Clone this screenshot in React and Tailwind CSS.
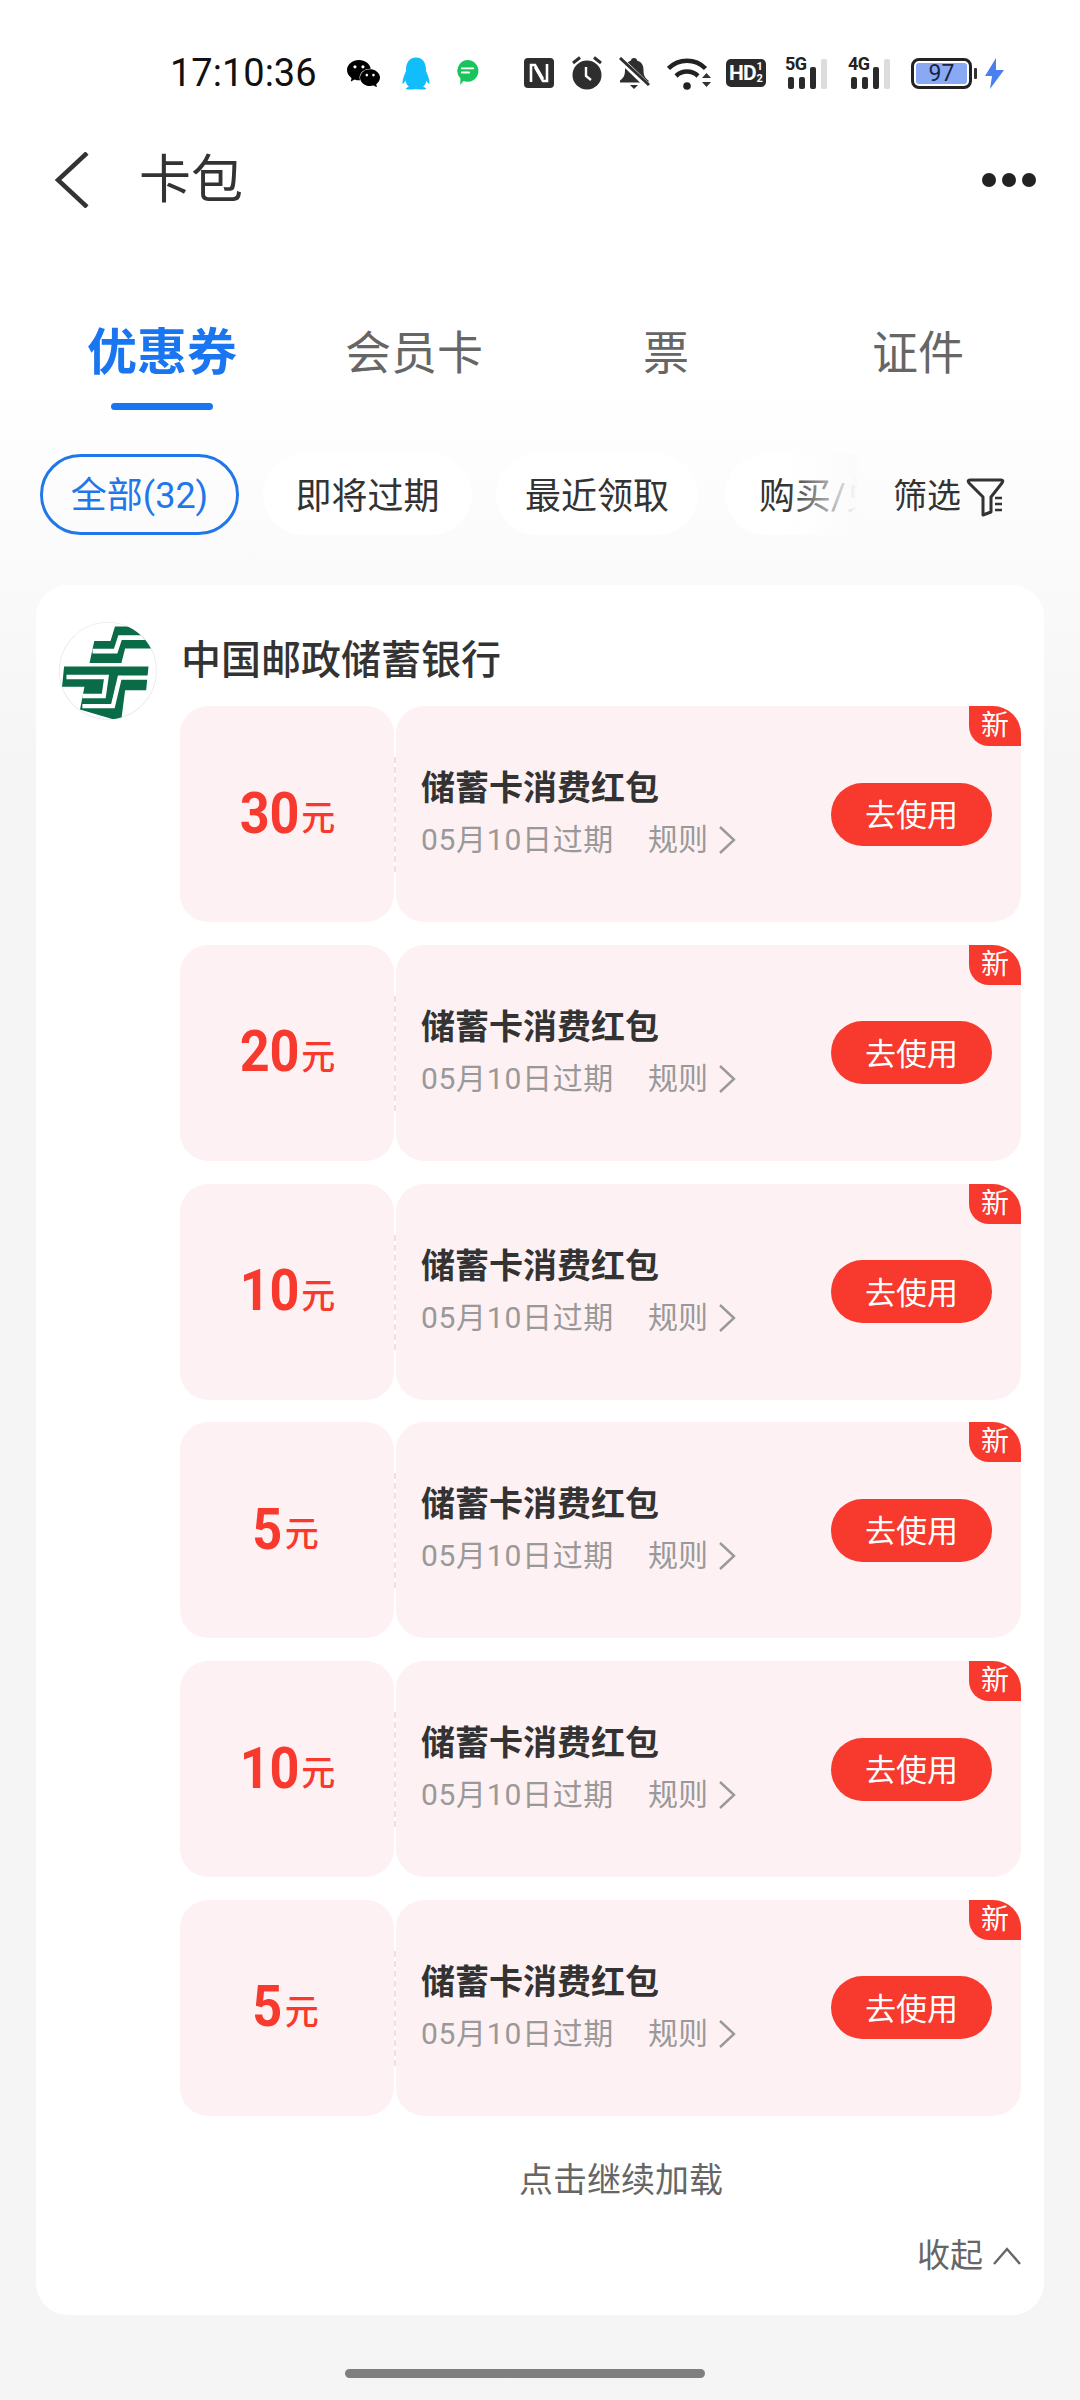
import { SiWechat, SiTencentqq } from 'react-icons/si'

const tabs = ['优惠券', '会员卡', '票', '证件']

const coupons = [
  { amount: '30' },
  { amount: '20' },
  { amount: '10' },
  { amount: '5' },
  { amount: '10' },
  { amount: '5' },
]

function Signal({ label }) {
  return (
    <div className="relative w-[46px] h-[32px] flex items-end gap-[5px] pl-[3px]">
      <span className="absolute left-0 top-[-2px] text-[18px] leading-[18px] font-bold tracking-[-0.5px] text-[#222]">{label}</span>
      <span className="w-[6px] h-[12px] rounded-[2px] bg-[#2a2a2a]" />
      <span className="w-[6px] h-[12px] rounded-[2px] bg-[#2a2a2a]" />
      <span className="w-[6px] h-[22px] rounded-[2px] bg-[#2a2a2a]" />
      <span className="w-[6px] h-[30px] rounded-[2px] bg-[#dcdcdc]" />
    </div>
  )
}

function StatusBar() {
  return (
    <div className="h-[110px] pt-[36px] pl-[170px] flex items-center">
      <span className="w-[145px] text-[38px] leading-[44px] text-[#111] whitespace-nowrap">17:10:36</span>
      <SiWechat className="ml-[32px] w-[33px] h-[33px] text-black" />
      <SiTencentqq className="ml-[20px] w-[32px] h-[37px] text-[#12bdfb]" />
      <svg className="ml-[24px]" width="23" height="29" viewBox="0 0 22 28">
        <path d="M11 1a10.500 10.500 0 1 1-4 20.200L4 25l.2-6.200A10.500 10.500 0 0 1 11 1z" fill="#19c45c" />
        <path d="M5.500 9h11M5.500 13h7" stroke="#fff" strokeWidth="1.800" strokeLinecap="round" />
      </svg>
      <svg className="ml-[45px]" width="30" height="30" viewBox="0 0 30 30">
        <rect width="30" height="30" rx="4" fill="#2e2e2e" />
        <path d="M7 24V7h4l8 14" fill="none" stroke="#fff" strokeWidth="2.600" />
        <path d="M23 6v17h-4l-8-14" fill="none" stroke="#fff" strokeWidth="2.600" />
      </svg>
      <svg className="ml-[17px]" width="32" height="34" viewBox="0 0 32 34">
        <circle cx="16" cy="19" r="14.500" fill="#2e2e2e" />
        <path d="M15 11v9l5 4" fill="none" stroke="#fff" strokeWidth="2.400" />
        <path d="M2 7l7-5.500M30 7l-7-5.500" stroke="#2e2e2e" strokeWidth="3" />
      </svg>
      <svg className="ml-[16px]" width="31" height="33" viewBox="0 0 31 33">
        <path d="M15 1c2 0 3 1 3 2.500 5 1.500 6.500 5 6.500 9.500 0 5 1 7.500 5 10.500v2H1v-2c4-3 5-5.500 5-10.500 0-4.500 1.500-8 6-9.500C12 2 13 1 15 1z" fill="#2e2e2e" />
        <path d="M11 28h8l-4 4z" fill="#2e2e2e" />
        <path d="M1 2l28 27" stroke="#fff" strokeWidth="6" />
        <path d="M1 1l29 27" stroke="#2e2e2e" strokeWidth="3" />
      </svg>
      <svg className="ml-[17px]" width="44" height="33" viewBox="0 0 44 33">
        <path d="M1.500 11.500a26 26 0 0 1 37 0" fill="none" stroke="#222" strokeWidth="4.500" />
        <path d="M9 19a16 16 0 0 1 22 0" fill="none" stroke="#222" strokeWidth="4.500" />
        <circle cx="20" cy="29" r="3.800" fill="#222" />
        <path d="M35 21l4.500-5 4.500 5zM35 25l4.500 5 4.500-5z" fill="#333" />
      </svg>
      <div className="ml-[15px] w-[40px] h-[28px] rounded-[5px] bg-[#2a2a2a] flex items-center justify-center text-white">
        <span className="text-[21px] leading-[28px] font-bold tracking-[-1px]">HD</span>
        <span className="ml-[1px] flex flex-col text-[11px] leading-[12px] font-bold">
          <span>1</span>
          <span>2</span>
        </span>
      </div>
      <div className="ml-[19px]"><Signal label="5G" /></div>
      <div className="ml-[17px]"><Signal label="4G" /></div>
      <div className="ml-[17px] w-[61px] h-[31px] rounded-[8px] border-[3px] border-[#222] p-[2px]">
        <div className="h-full rounded-[3px] bg-[#8aa9f5] flex items-center justify-center text-[23px] leading-none text-[#1a2340]">97</div>
      </div>
      <div className="ml-[2px] w-[3px] h-[11px] rounded-[1px] bg-[#333]" />
      <svg className="ml-[8px]" width="19" height="31" viewBox="0 0 19 31">
        <path d="M11 0L0 18h7l-2 13L19 12h-8z" fill="#4a7ff0" />
      </svg>
    </div>
  )
}

function PostLogo() {
  return (
    <svg className="shrink-0" width="98" height="98" viewBox="13 14 289 289">
      <defs>
        <clipPath id="logo-clip">
          <circle cx="157" cy="158" r="143" />
        </clipPath>
      </defs>
      <circle cx="157" cy="158" r="143" fill="#fff" stroke="#e8eeeb" strokeWidth="3" />
      <g clipPath="url(#logo-clip)">
        <path d="M178 27H300V92H208L197 135H103L117 70H165z" fill="#0a6b47" />
        <path d="M270 60H193L180 100H112" fill="none" stroke="#fff" strokeWidth="14" />
        <path d="M28 145H277L270 215H208L197 300H170L75 272L88 205H22z" fill="#0a6b47" />
        <path d="M35 176H153L145 232H82" fill="none" stroke="#fff" strokeWidth="13" />
        <path d="M82 262H172L192 178H280" fill="none" stroke="#fff" strokeWidth="13" />
      </g>
    </svg>
  )
}

function Coupon({ amount }) {
  return (
    <div className="flex h-[216px]">
      <div className="w-[214px] shrink-0 rounded-[28px] bg-[#fef1f3] pr-[6px] flex items-center justify-center text-[#f8392e]">
        <span className="inline-block mb-[3px] text-[58px] leading-[64px] font-bold scale-x-[.9] origin-right">{amount}</span>
        <span className="ml-[2px] text-[34px] leading-[40px] font-medium mt-[8px]">元</span>
      </div>
      <div className="relative flex-1 ml-[2px] rounded-[28px] bg-[#fef1f3] flex items-center pl-[25px] pr-[29px] justify-between">
        <div className="absolute left-[-2px] top-[51px] h-[115px] border-l-2 border-dashed border-[#f1dfe2]" />
        <div className="flex flex-col mb-[4px]">
          <span className="text-[34px] leading-[48px] font-bold text-[#333]">储蓄卡消费红包</span>
          <div className="mt-[8px] flex items-center text-[30px] leading-[40px] text-[#999]">
            <span className="w-[190px] whitespace-nowrap tracking-[0.7px]">05月10日过期</span>
            <span className="ml-[37px]">规则</span>
            <svg className="ml-[9px]" width="20" height="30" viewBox="0 0 20 30">
              <path d="M3 2l14 13L3 28" fill="none" stroke="#999" strokeWidth="2.400" />
            </svg>
          </div>
        </div>
        <button className="w-[161px] h-[63px] pt-[3px] rounded-full bg-[#f8392e] text-white text-[31px] leading-none">去使用</button>
        <span className="absolute top-0 right-0 w-[52px] h-[40px] rounded-tr-[28px] rounded-bl-[20px] bg-[#f8392e] text-white text-[28px] leading-[40px] text-center">新</span>
      </div>
    </div>
  )
}

export default function App() {
  return (
    <div className="w-[1080px] h-[2400px] overflow-hidden bg-linear-to-b from-white from-[16%] to-[#f5f5f5] to-[32%] font-['Roboto','Noto_Sans_CJK_SC',sans-serif]">
      <StatusBar />

      {/* nav */}
      <div className="h-[140px] pl-[55px] pr-[44px] flex items-center justify-between">
        <div className="flex items-center">
          <svg width="34" height="56" viewBox="0 0 34 56">
            <path d="M32 1L3 28l29 27" fill="none" stroke="#333" strokeWidth="4.500" />
          </svg>
          <span className="ml-[50px] pt-[2px] text-[52px] leading-[70px] text-[#333]">卡包</span>
        </div>
        <div className="flex gap-[6px]">
          <span className="w-[14px] h-[14px] rounded-full bg-[#222]" />
          <span className="w-[14px] h-[14px] rounded-full bg-[#222]" />
          <span className="w-[14px] h-[14px] rounded-full bg-[#222]" />
        </div>
      </div>

      {/* tabs */}
      <div className="grid grid-cols-4 mx-[36px] pt-[73px]">
        {tabs.map((tab, i) => (
          <div key={tab} className="flex flex-col items-center">
            <span className={`leading-[60px] ${i === 0 ? 'text-[50px] font-bold text-[#1a75f0]' : 'text-[46px] text-[#666]'}`}>{tab}</span>
            {i === 0 && <span className="mt-[20px] w-[102px] h-[7px] rounded-full bg-[#1a75f0]" />}
          </div>
        ))}
      </div>

      {/* chips */}
      <div className="mt-[44px] ml-[40px] flex items-center h-[81px]">
        <div className="relative w-[817px] h-full overflow-hidden flex gap-[24px] text-[36px] text-[#333]">
          <div className="w-[199px] shrink-0 rounded-full border-[3px] border-[#1f77ea] text-[#1f77ea] pt-[3px] flex items-center justify-center">全部(32)</div>
          <div className="w-[209px] shrink-0 rounded-full bg-white pt-[4px] flex items-center justify-center">即将过期</div>
          <div className="w-[202px] shrink-0 rounded-full bg-white pt-[4px] flex items-center justify-center">最近领取</div>
          <div className="ml-[3px] w-[240px] shrink-0 rounded-full bg-white pt-[4px] flex items-center pl-[34px] whitespace-nowrap">购买/兑换</div>
          <div className="absolute right-0 top-0 bottom-0 w-[70px] bg-linear-to-r from-transparent to-[#fbfbfb]" />
        </div>
        <span className="ml-[36px] mt-[2px] text-[34px] leading-[44px] text-[#333] whitespace-nowrap">筛选</span>
        <svg className="ml-[-1px]" width="50" height="55" viewBox="0 0 50 55">
          <path d="M10 13H41Q44 13 42 16L31 30V45L23 48V30L9 16Q7 13 10 13Z" fill="none" stroke="#333" strokeWidth="3" strokeLinejoin="round" />
          <path d="M35 31H42M35 37H42M35 43H42" stroke="#333" strokeWidth="2.500" />
        </svg>
      </div>

      {/* card */}
      <div className="mt-[50px] mx-[36px] rounded-[32px] bg-white pt-[37px] pb-[37px]">
        <div className="h-[84px] pl-[23px] flex items-start">
          <PostLogo />
          <span className="ml-[24px] text-[40px] leading-[78px] font-medium text-[#333] whitespace-nowrap">中国邮政储蓄银行</span>
        </div>

        <div className="ml-[144px] mr-[23px] flex flex-col gap-[22.8px]">
          {coupons.map((c, i) => (
            <Coupon key={i} amount={c.amount} />
          ))}
        </div>

        <div className="mt-[40px] ml-[162px] text-center text-[34px] leading-[48px] text-[#666]">点击继续加载</div>
        <div className="mt-[30px] pr-[23px] flex items-center justify-end text-[33px] leading-[44px] text-[#666]">
          收起
          <svg className="ml-[10px]" width="28" height="18" viewBox="0 0 28 18">
            <path d="M1 17L14 2l13 15" fill="none" stroke="#666" strokeWidth="2.400" />
          </svg>
        </div>
      </div>

      {/* home indicator */}
      <div className="mt-[54px] ml-[345px] w-[360px] h-[9px] rounded-full bg-[#7f7f7f]" />
    </div>
  )
}
